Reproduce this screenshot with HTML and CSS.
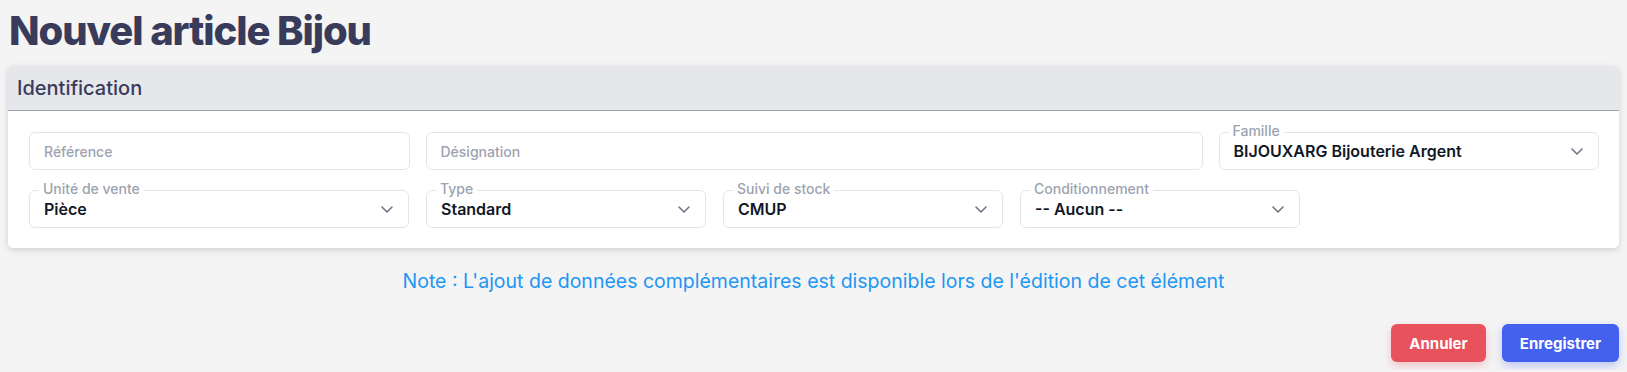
FILE: index.html
```html
<!DOCTYPE html>
<html lang="fr">
<head>
<meta charset="utf-8">
<title>Nouvel article Bijou</title>
<link rel="stylesheet" href="styles.css">
</head>
<body>
<h1 class="page-title">Nouvel article Bijou</h1>
<section class="card">
  <div class="card-header">Identification</div>
  <div class="card-body">
    <div class="row row-1">
      <div class="field span-3"><input class="control" type="text" placeholder="Référence"></div>
      <div class="field span-6"><input class="control" type="text" placeholder="Désignation"></div>
      <div class="field span-3">
        <span class="float-label">Famille</span>
        <div class="control select"><span class="value">BIJOUXARG Bijouterie Argent</span><svg class="chev" viewBox="0 0 12 7" width="12" height="7"><path d="M1 1l5 5 5-5" fill="none" stroke="#6b7280" stroke-width="1.5" stroke-linecap="round" stroke-linejoin="round"/></svg></div>
      </div>
    </div>
    <div class="row row-2">
      <div class="field">
        <span class="float-label">Unité de vente</span>
        <div class="control select"><span class="value">Pièce</span><svg class="chev" viewBox="0 0 12 7" width="12" height="7"><path d="M1 1l5 5 5-5" fill="none" stroke="#6b7280" stroke-width="1.5" stroke-linecap="round" stroke-linejoin="round"/></svg></div>
      </div>
      <div class="field">
        <span class="float-label">Type</span>
        <div class="control select"><span class="value">Standard</span><svg class="chev" viewBox="0 0 12 7" width="12" height="7"><path d="M1 1l5 5 5-5" fill="none" stroke="#6b7280" stroke-width="1.5" stroke-linecap="round" stroke-linejoin="round"/></svg></div>
      </div>
      <div class="field">
        <span class="float-label">Suivi de stock</span>
        <div class="control select"><span class="value">CMUP</span><svg class="chev" viewBox="0 0 12 7" width="12" height="7"><path d="M1 1l5 5 5-5" fill="none" stroke="#6b7280" stroke-width="1.5" stroke-linecap="round" stroke-linejoin="round"/></svg></div>
      </div>
      <div class="field">
        <span class="float-label">Conditionnement</span>
        <div class="control select"><span class="value">-- Aucun --</span><svg class="chev" viewBox="0 0 12 7" width="12" height="7"><path d="M1 1l5 5 5-5" fill="none" stroke="#6b7280" stroke-width="1.5" stroke-linecap="round" stroke-linejoin="round"/></svg></div>
      </div>
    </div>
  </div>
</section>
<p class="note">Note : L'ajout de données complémentaires est disponible lors de l'édition de cet élément</p>
<div class="actions">
  <button class="btn btn-cancel" type="button">Annuler</button>
  <button class="btn btn-save" type="button">Enregistrer</button>
</div>
</body>
</html>
```
FILE: styles.css
```css
* { box-sizing: border-box; }
html, body { margin: 0; }
body {
  padding: 8px;
  background: #f4f4f5;
  font-family: Inter, "Noto Sans", sans-serif;
  color: #111827;
}
.page-title {
  margin: -1px 0 11px 1px;
  font-size: 40px;
  line-height: 48px;
  font-weight: 800;
  letter-spacing: -1.1px;
  color: #393b5b;
}
.card {
  background: #fff;
  border-radius: 5px;
  box-shadow: 0 2px 6px rgba(0,0,0,0.15);
  overflow: hidden;
}
.card-header {
  background: #e5e7eb;
  height: 45px;
  padding: 0 9px;
  display: flex;
  align-items: center;
  font-size: 20px;
  font-weight: 500;
  color: #393b5b;
  border-bottom: 1px solid #9ca3af;
}
.card-body {
  padding: 21px 20px 20px 21px;
  display: flex;
  flex-direction: column;
  gap: 20px;
}
.row { display: grid; gap: 16px; }
.row-1 { grid-template-columns: repeat(12, minmax(0, 1fr)); }
.span-3 { grid-column: span 3; }
.span-6 { grid-column: span 6; }
.row-2 { grid-template-columns: 380fr 280fr 280fr 280fr 282fr; gap: 17px; }
.field { position: relative; min-width: 0; }
.control {
  display: flex;
  align-items: center;
  width: 100%;
  height: 38px;
  border: 1px solid #e2e5ea;
  border-radius: 6px;
  background: #fff;
  padding: 0 15px 0 14px;
  font-family: Inter, sans-serif;
  font-size: 16px;
  font-weight: 600;
  color: #111827;
  outline: none;
}
input.control::placeholder {
  color: #9ca3af;
  font-size: 14px;
  font-weight: 500;
}
.select { justify-content: space-between; }
.value { white-space: nowrap; }
.chev { flex: none; }
.float-label {
  position: absolute;
  left: 10px;
  top: -9px;
  padding: 0 4px;
  background: #fff;
  font-size: 14px;
  line-height: 16px;
  font-weight: 500;
  color: #9ca3af;
}
.note {
  margin: 21px 0 0;
  text-align: center;
  font-family: Inter, sans-serif;
  font-size: 19.5px;
  line-height: 24px;
  color: #2196f3;
}
.actions {
  display: flex;
  justify-content: flex-end;
  gap: 16px;
  margin-top: 31px;
}
.btn {
  height: 38px;
  border: none;
  border-radius: 6px;
  color: #fff;
  font-family: Inter, sans-serif;
  font-size: 15px;
  font-weight: 700;
  padding: 0;
  cursor: pointer;
}
.btn-cancel {
  width: 95px;
  background: #e8525c;
  box-shadow: 0 4px 10px rgba(232,82,92,0.3);
}
.btn-save {
  width: 117px;
  background: #4361ee;
  box-shadow: 0 4px 10px rgba(67,97,238,0.3);
}
```
